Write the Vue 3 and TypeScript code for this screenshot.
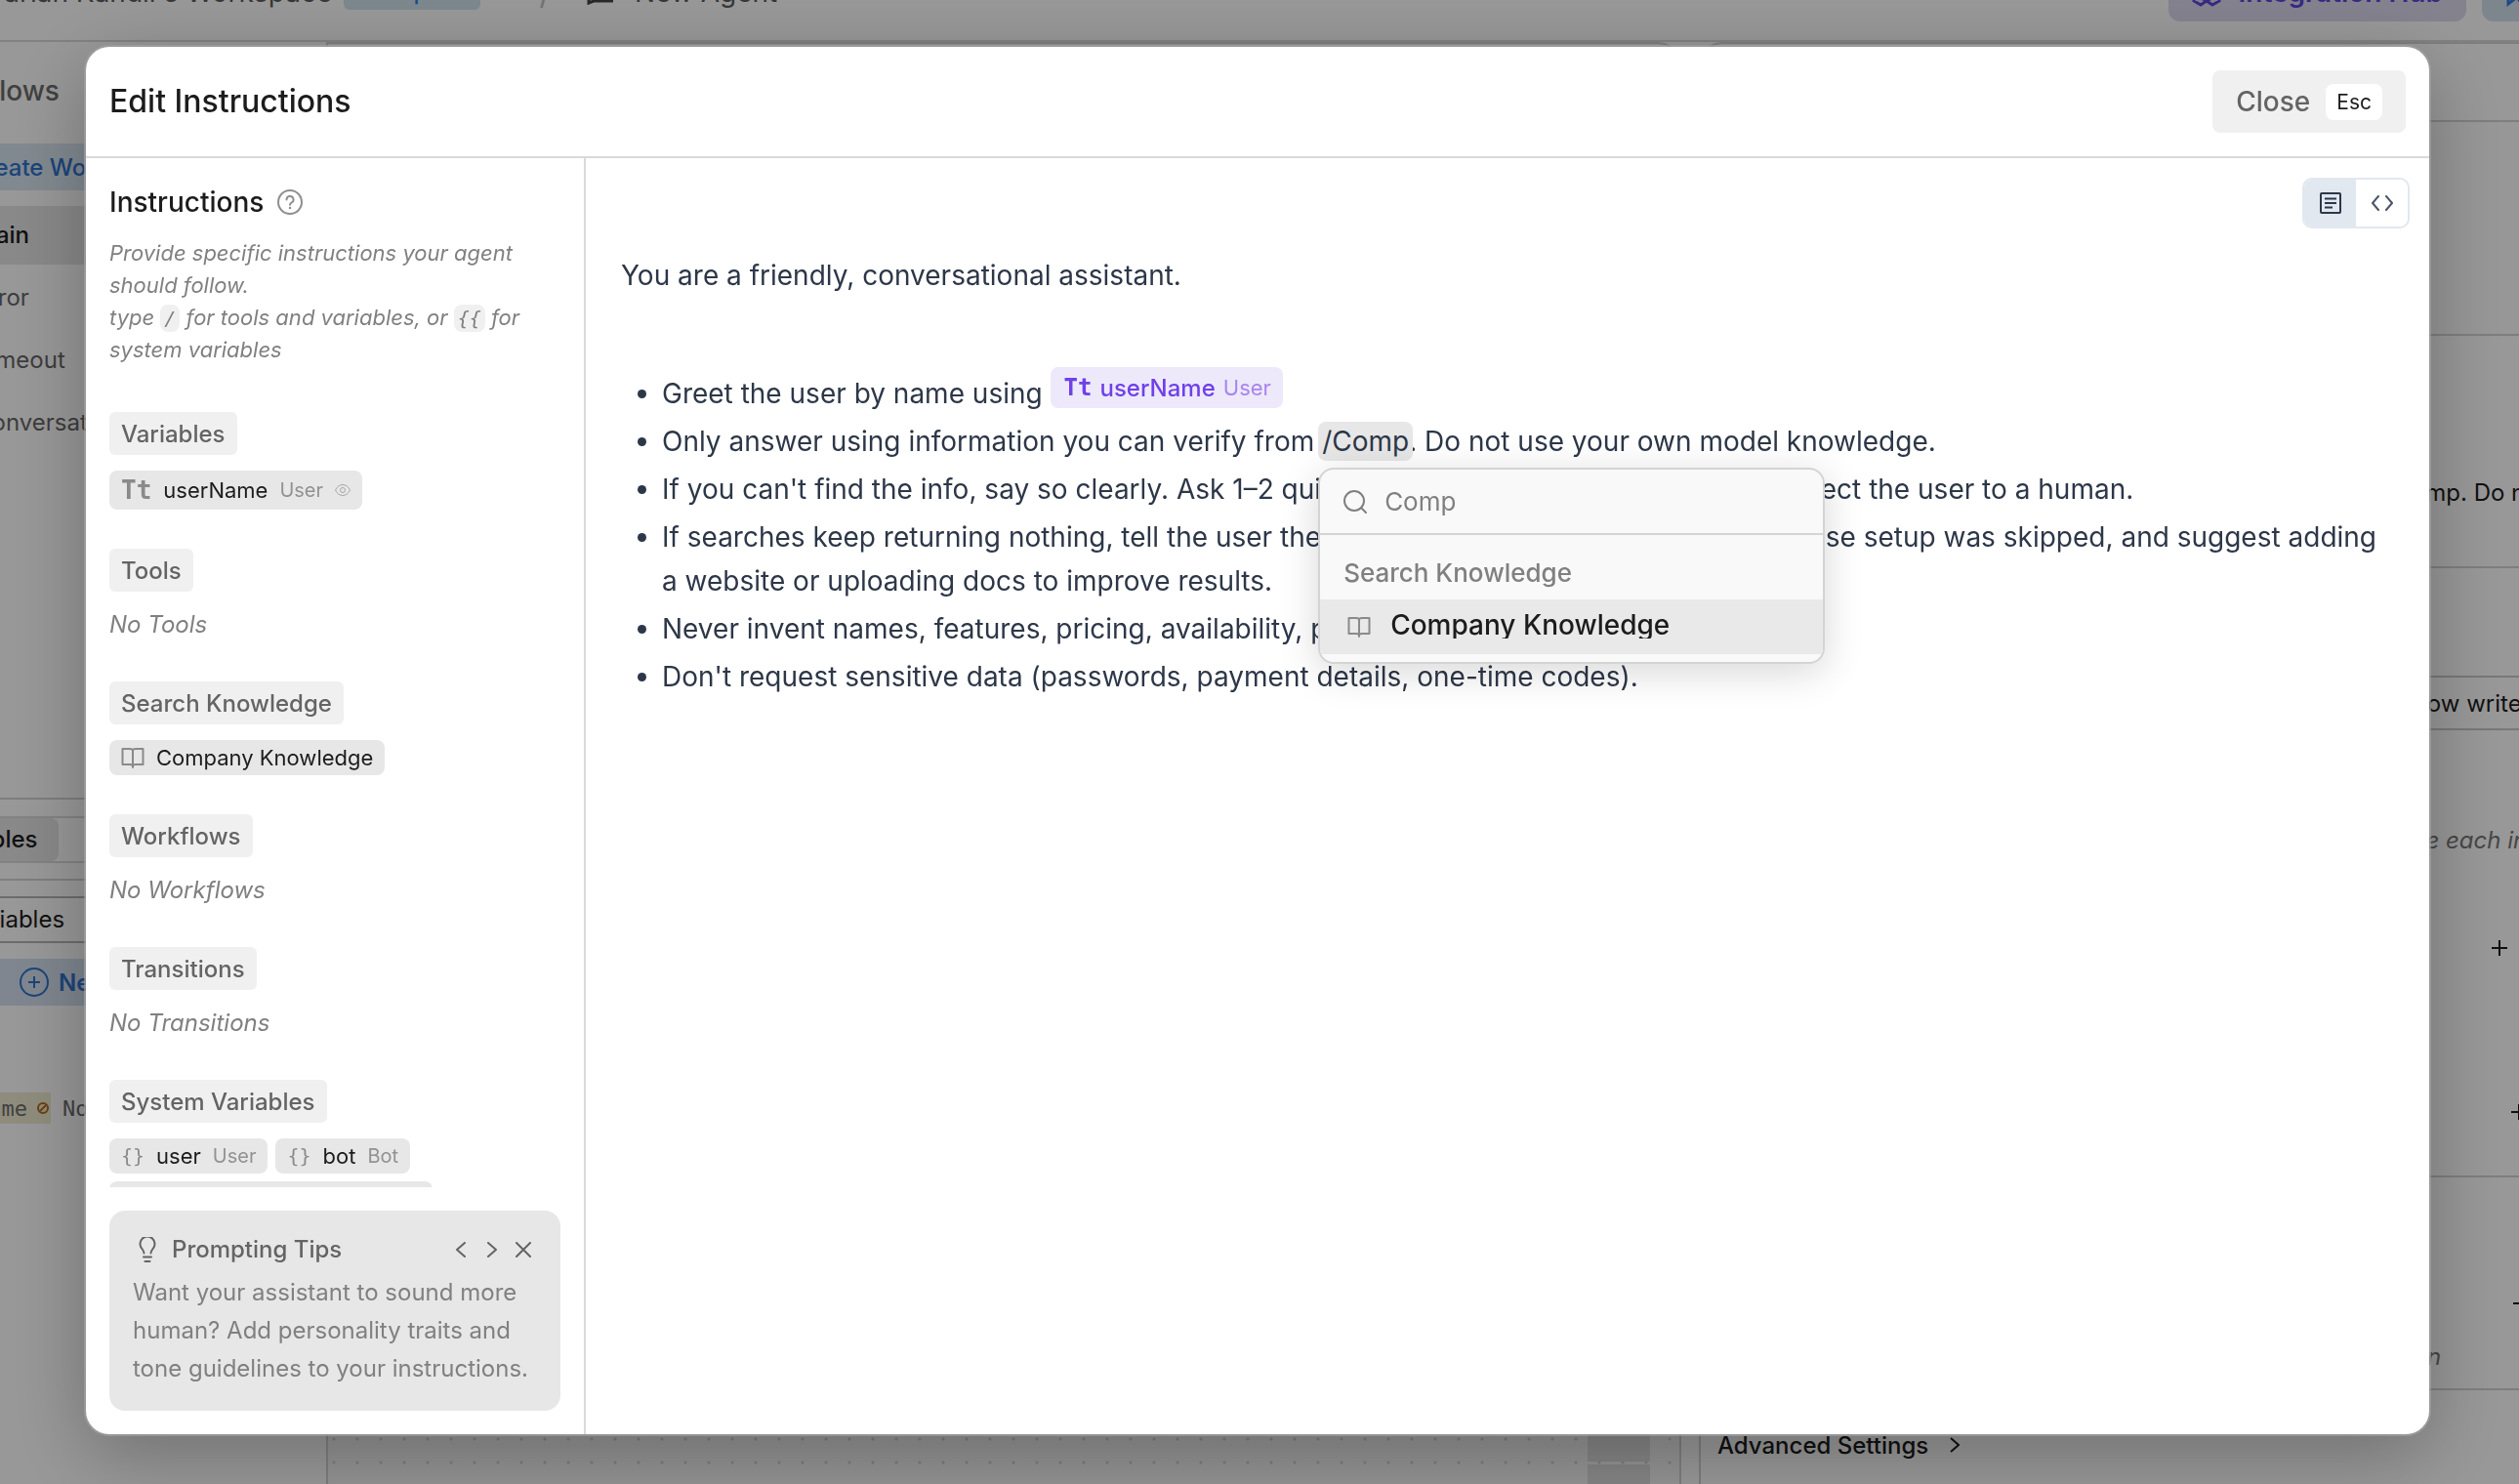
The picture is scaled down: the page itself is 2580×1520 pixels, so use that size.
<script setup lang="ts">
import { ref } from 'vue'

type ChipIcon = 'text' | 'book' | 'braces'
interface Chip { icon: ChipIcon; name: string; scope?: string; visible?: boolean }
interface Section { title: string; empty?: string; chips: Chip[] }

const sections: Section[] = [
  { title: 'Variables', chips: [{ icon: 'text', name: 'userName', scope: 'User', visible: true }] },
  { title: 'Tools', empty: 'No Tools', chips: [] },
  { title: 'Search Knowledge', chips: [{ icon: 'book', name: 'Company Knowledge' }] },
  { title: 'Workflows', empty: 'No Workflows', chips: [] },
  { title: 'Transitions', empty: 'No Transitions', chips: [] },
  {
    title: 'System Variables',
    chips: [
      { icon: 'braces', name: 'user', scope: 'User' },
      { icon: 'braces', name: 'bot', scope: 'Bot' },
      { icon: 'braces', name: 'conversation', scope: 'Conversation' },
    ],
  },
]

const workflows = ['Main', 'Error', 'Timeout', 'Conversation End']
const query = ref('Comp')
</script>

<template>
  <div class="screen">
    <div class="shell">
      <header class="topbar">
        <span class="crumb">Darian Kandil's Workspace</span>
        <span class="plan">Enterprise</span>
        <span class="slash">/</span>
        <svg class="chat" viewBox="0 0 28 28" fill="none" stroke="currentColor" stroke-width="3"><path d="M3 25V3h24v20H8z" /></svg>
        <span class="agent">New Agent</span>
        <span class="grow"></span>
        <button class="hub" type="button">
          <svg viewBox="0 0 30 30" fill="none" stroke="currentColor" stroke-width="3"><path d="M8 12l7-4 7 4v8l-7 4-7-4zM15 16v8M2 19l6-4 7 4v5l-6 4-7-4zM28 19l-6-4-7 4v5l6 4 7-4z" /></svg>
          Integration Hub
        </button>
        <button class="share" type="button" aria-label="Launch">
          <svg viewBox="0 0 30 30" fill="none" stroke="currentColor" stroke-width="3"><path d="M3 27V16L26 3 17 27l-5-7z" /></svg>
        </button>
      </header>

      <div class="columns">
        <nav class="flows">
          <h2 class="flows-title">Workflows</h2>
          <button class="create" type="button">Create Workflow</button>
          <ul class="flow-list">
            <li v-for="(flow, i) in workflows" :key="flow" :class="{ active: i === 0 }">{{ flow }}</li>
          </ul>
          <div class="tabs-wrap">
            <div class="tabs"><span class="tab on">Variables</span><span class="tab"></span></div>
          </div>
          <div class="filter">Search Variables</div>
          <button class="new-var" type="button">
            <svg viewBox="0 0 30 30" fill="none" stroke="currentColor" stroke-width="2"><circle cx="15" cy="15" r="14" /><path d="M15 9v12M9 15h12" /></svg>
            New Variable
          </button>
          <div class="var-row">
            <span class="var-tag">userName
              <svg viewBox="0 0 12 12" fill="none" stroke="currentColor" stroke-width="2"><circle cx="6" cy="6" r="5" /><path d="M3 9l6-6" /></svg>
            </span>
            <span>No value</span>
          </div>
        </nav>
        <main class="canvas"><div class="map"><i></i><i></i></div></main>
        <aside class="panel">
          <div class="p-head"></div>
          <div class="p-info"></div>
          <div class="p-text">from /Comp. Do not use</div>
          <div class="p-model"><span class="p-input">How writer</span></div>
          <div class="p-tools">
            <em>Configure each input</em>
            <svg class="plus first" viewBox="0 0 16 16" stroke="currentColor" stroke-width="2"><path d="M8 0v16M0 8h16" /></svg>
            <svg class="plus" viewBox="0 0 16 16" stroke="currentColor" stroke-width="2"><path d="M8 0v16M0 8h16" /></svg>
          </div>
          <div class="p-trans">
            <svg class="plus" viewBox="0 0 16 16" stroke="currentColor" stroke-width="2"><path d="M0 8h16" /></svg>
            <em>transition</em>
          </div>
          <div class="p-adv">Advanced Settings
            <svg viewBox="0 0 10 16" fill="none" stroke="currentColor" stroke-width="2"><path d="M1 1l8 7-8 7" /></svg>
          </div>
        </aside>
      </div>
    </div>

    <div class="overlay">
      <section class="modal" role="dialog" aria-labelledby="modal-title">
        <header class="modal-head">
          <h1 id="modal-title">Edit Instructions</h1>
          <button class="close" type="button">Close <kbd>Esc</kbd></button>
        </header>
        <div class="modal-body">
          <aside class="side">
            <div class="side-scroll">
              <h2 class="side-title">
                Instructions
                <svg class="help" viewBox="0 0 26 26" fill="none" stroke="currentColor" stroke-width="2" stroke-linecap="round"><circle cx="13" cy="13" r="12" /><path d="M9.500 10.500a3.500 3.500 0 1 1 5 3.200c-1 .5-1.500 1-1.500 2" /><path d="M13 18.900v.1" stroke-width="2.500" /></svg>
              </h2>
              <p class="hint">Provide specific instructions your agent should follow.<br />type <code>/</code> for tools and variables, or <code>{{ '\u007b\u007b' }}</code> for system variables</p>

              <div v-for="s in sections" :key="s.title" class="group">
                <h3>{{ s.title }}</h3>
                <p v-if="s.empty" class="empty">{{ s.empty }}</p>
                <div v-else class="chips">
                  <span v-for="c in s.chips" :key="c.name" class="chip" :class="{ tall: c.icon === 'text' }">
                    <b v-if="c.icon === 'text'" class="tt">Tt</b>
                    <svg v-else-if="c.icon === 'book'" class="book" viewBox="0 0 24 24" fill="none" stroke="currentColor" stroke-width="2" stroke-linejoin="round" stroke-linecap="round"><path d="M12 5v17M12 5c0-1.500-1-2-3-2H1.500v16H9c2 0 3 .5 3 2 0-1.500 1-2 3-2h7.500V3H15c-2 0-3 .5-3 2z" /></svg>
                    <span v-else class="braces">{}</span>
                    <span class="name">{{ c.name }}</span>
                    <span v-if="c.scope" class="scope">{{ c.scope }}</span>
                    <svg v-if="c.visible" class="eye" viewBox="0 0 16 12" fill="none" stroke="currentColor" stroke-width="1"><path d="M.5 6C2 2.500 5 .5 8 .5S14 2.500 15.500 6C14 9.500 11 11.500 8 11.500S2 9.500 .5 6z" /><ellipse cx="8" cy="6" rx="2.500" ry="2.500" /></svg>
                  </span>
                </div>
              </div>
            </div>

            <div class="tips">
              <div class="tips-head">
                <svg class="bulb" viewBox="0 0 18 26" fill="none" stroke="currentColor" stroke-width="2" stroke-linecap="round"><path d="M5.500 16.500c0-2-1-3-2.500-5a7.500 7.500 0 1 1 12 0c-1.500 2-2.500 3-2.500 5M5 20.500h8M6.500 25h5" /></svg>
                <h3>Prompting Tips</h3>
                <button type="button" aria-label="Previous tip"><svg viewBox="0 0 16 16" fill="none" stroke="currentColor" stroke-width="2" stroke-linecap="round" stroke-linejoin="round"><path d="M12 1L4 8l8 7" /></svg></button>
                <button type="button" aria-label="Next tip"><svg viewBox="0 0 16 16" fill="none" stroke="currentColor" stroke-width="2" stroke-linecap="round" stroke-linejoin="round"><path d="M4 1l8 7-8 7" /></svg></button>
                <button type="button" aria-label="Dismiss"><svg viewBox="0 0 16 16" fill="none" stroke="currentColor" stroke-width="2" stroke-linecap="round"><path d="M1 1l14 14M15 1L1 15" /></svg></button>
              </div>
              <p>Want your assistant to sound more human? Add personality traits and tone guidelines to your instructions.</p>
            </div>
          </aside>

          <div class="editor">
            <div class="toggle">
              <button class="on" type="button" aria-label="Rich text"><svg viewBox="0 0 22 22" fill="none" stroke="currentColor" stroke-width="2"><rect x="1" y="1" width="20" height="20" rx="1" /><path d="M5 6.500h12M5 11h12M5 15.500h8" /></svg></button>
              <button type="button" aria-label="Source"><svg viewBox="0 0 22 22" fill="none" stroke="currentColor" stroke-width="2" stroke-linecap="round" stroke-linejoin="round"><path d="M7 4L1 11l6 7M15 4l6 7-6 7" /></svg></button>
            </div>
            <div class="doc">
              <p>You are a friendly, conversational assistant.</p>
              <ul>
                <li>Greet the user by name using <span class="mention"><b class="tt">Tt</b><b>userName</b><span>User</span></span></li>
                <li>Only answer using information you can verify from <span class="slash-wrap"><mark>/Comp</mark><span class="menu">
                  <label class="search">
                    <svg viewBox="0 0 24 24" fill="none" stroke="currentColor" stroke-width="2" stroke-linecap="round"><circle cx="11" cy="11" r="10" /><path d="M18 18l5 5" /></svg>
                    <input v-model="query" type="text" aria-label="Search" />
                  </label>
                  <span class="menu-title">Search Knowledge</span>
                  <button class="option" type="button">
                    <svg class="book" viewBox="0 0 24 24" fill="none" stroke="currentColor" stroke-width="2" stroke-linejoin="round" stroke-linecap="round"><path d="M12 5v17M12 5c0-1.500-1-2-3-2H1.500v16H9c2 0 3 .5 3 2 0-1.500 1-2 3-2h7.500V3H15c-2 0-3 .5-3 2z" /></svg>
                    <span>Company Knowledge</span>
                  </button>
                </span></span>. Do not use your own model knowledge.</li>
                <li>If you can't find the info, say so clearly. Ask 1–2 quick clarifying questions or offer to connect the user to a human.</li>
                <li>If searches keep returning nothing, tell the user the library may be empty or knowledge base setup was skipped, and suggest adding a website or uploading docs to improve results.</li>
                <li>Never invent names, features, pricing, availability, policies, or results.</li>
                <li>Don't request sensitive data (passwords, payment details, one-time codes).</li>
              </ul>
            </div>
          </div>
        </div>
      </section>
    </div>
  </div>
</template>

<style>
body { margin: 0; }
</style>

<style scoped>
* { box-sizing: border-box; }
h1, h2, h3, p, ul { margin: 0; }
button { border: 0; padding: 0; font: inherit; color: inherit; background: none; }
svg { flex: none; display: block; }
.screen { height: 100vh; overflow: hidden; background: #fefefe; font-family: Inter, "Open Sans", sans-serif; font-size: 24px; color: #1c1c1c; }

/* Application behind the dialog */
.shell { display: flex; flex-direction: column; height: calc(100vh + 57px); margin: -57px -80px 0 -100px; }
.topbar { flex: none; display: flex; align-items: center; height: 100px; padding-left: 84px; border-bottom: 2px solid #d9d9d9; font-size: 28px; color: #5c5c5c; }
.plan { margin-left: 12px; padding: 0 16px; height: 36px; line-height: 36px; border-radius: 6px; background: #d0e2ec; color: #2f7de0; font-size: 22px; font-weight: 500; }
.slash { margin: 0 36px 0 60px; font-size: 32px; color: #c0c0c0; }
.chat { width: 28px; height: 28px; margin-right: 22px; color: #444; }
.grow { flex: 1; }
.hub, .share { display: flex; align-items: center; gap: 18px; height: 60px; padding: 0 24px; border-radius: 12px; font-weight: 600; background: #dcd9ec; color: #5a46d8; }
.share { width: 118px; margin-left: 16px; background: #d3dfec; color: #2f7de0; }
.hub svg, .share svg { width: 30px; }
.columns { flex: 1; min-height: 0; display: flex; gap: 18px; }
.flows { width: 436px; margin-right: -18px; border-right: 2px solid #d2d2d2; }
.flows-title { padding: 32px 18px 36px; font-size: 28px; line-height: 36px; font-weight: 500; color: #6c6c6c; }
.create { display: block; width: 400px; height: 48px; padding-left: 68px; background: #d8e5f0; color: #2f72cc; text-align: left; font-weight: 500; }
.flow-list { padding: 16px 0 0; list-style: none; height: 624px; color: #666; border-bottom: 2px solid #d2d2d2; }
.flow-list li { height: 60px; margin-bottom: 4px; padding-left: 74px; line-height: 60px; }
.flow-list .active { background: #e4e4e4; color: #1c1c1c; font-weight: 500; }
.tabs-wrap { padding: 17px 0 16px; border-bottom: 2px solid #d2d2d2; }
.tabs { display: flex; height: 48px; border: 2px solid #dadada; line-height: 44px; }
.tab { flex: 1; padding-left: 30px; }
.tab.on { flex: none; width: 158px; border-radius: 0 8px 8px 0; background: #e4e4e4; font-weight: 500; }
.filter { height: 48px; margin-top: 16px; line-height: 44px; border: 2px solid #b4b4b4; text-indent: -27px; }
.new-var { display: flex; align-items: center; gap: 10px; width: 100%; height: 48px; margin: 16px 0 89px; padding-left: 120px; background: #d5e0ee; color: #2f72cc; font-weight: 600; }
.new-var svg { width: 30px; }
.var-row { display: flex; align-items: center; gap: 12px; height: 32px; font: 22px "DejaVu Sans Mono", monospace; color: #6a6a6a; }
.var-tag { display: flex; align-items: center; justify-content: flex-end; gap: 10px; width: 152px; height: 32px; padding-right: 2px; background: #eeead0; }
.var-tag svg { width: 12px; color: #b36b1e; }
.canvas { flex: 1; min-width: 0; display: flex; align-items: flex-end; justify-content: flex-end; padding-right: 30px; border: 2px solid #d2d2d2; border-left: 0; border-bottom: 0; border-radius: 0 24px 0 0; background: radial-gradient(circle, #d0d0d0 1px, #f6f6f6 2px) 18px 1px / 24px 24px; }
.map { display: flex; flex-direction: column; gap: 3px; width: 64px; }
.map i { height: 60px; background: #dedede; }
.map i + i { height: 20px; }
.panel { width: 920px; border-left: 2px solid #d2d2d2; border-top: 2px solid #d2d2d2; border-radius: 24px 0 0 0; text-align: left; }
.panel > div { border-bottom: 2px solid #d2d2d2; overflow: hidden; }
.p-head { height: 80px; }
.p-info { height: 219px; background: #fcfcfc; }
.p-text { height: 238px; padding: 144px 0 0 642px; line-height: 34px; white-space: nowrap; }
.p-tools em, .p-trans em { color: #777; }
.panel > .p-model { height: 112px; padding-top: 110px; border-bottom-color: #c8c8c8; overflow: visible; }
.p-input { display: block; height: 56px; padding-left: 726px; line-height: 58px; border-bottom: 2px solid #c8c8c8; }
.p-tools { height: 512px; padding: 152px 0 0 644px; }
.plus { width: 16px; height: 16px; margin: 152px 0 0 186px; }
.plus.first { margin: 88px 0 0 166px; }
.p-trans { height: 218px; padding: 0 0 0 652px; }
.p-trans .plus { margin: 121px 0 32px 180px; }
.panel > .p-adv { display: flex; align-items: center; gap: 22px; height: 112px; padding-left: 17px; font-weight: 500; border: 0; }
.p-adv svg { width: 10px; }

/* Dialog */
.overlay { position: fixed; inset: 0; display: flex; padding: 48px 92px 51px 88px; background: rgba(0, 0, 0, 0.4); }
.modal { flex: 1; min-width: 0; display: flex; flex-direction: column; border-radius: 24px; background: #fff; box-shadow: 0 0 0 2px rgba(160, 160, 160, 0.7), 0 20px 80px rgba(0, 0, 0, 0.28); overflow: hidden; }
.modal-head { flex: none; display: flex; align-items: center; justify-content: space-between; height: 114px; padding: 0 24px; border-bottom: 2px solid #d9d9d9; }
.modal-head h1 { font-size: 32px; line-height: 40px; font-weight: 500; color: #1c1c1c; }
.close { display: flex; align-items: center; gap: 16px; height: 64px; padding: 0 24px; border-radius: 8px; background: #f0f0f0; color: #646464; font-size: 28px; font-weight: 500; }
kbd { height: 37px; padding: 0 11px; border-radius: 8px; background: #fff; color: #1c1c1c; font: 400 21px/37px Inter, sans-serif; }
.modal-body { flex: 1; min-height: 0; display: flex; }
.side { flex: none; display: flex; flex-direction: column; gap: 24px; width: 512px; padding: 24px; border-right: 2px solid #d9d9d9; }
.side-scroll { flex: 1; min-height: 0; overflow: hidden; }
.side-title { display: flex; align-items: center; gap: 14px; font-size: 28px; line-height: 42px; font-weight: 500; }
.help { width: 26px; color: #8f8f8f; }
.hint { margin: 15px 0 47px; font-size: 22px; line-height: 33px; font-style: italic; color: #808080; }
code { padding: 2px 4px; border-radius: 8px; background: #f0f0f0; font: italic 20px "DejaVu Sans Mono", monospace; }
.group { margin-bottom: 40px; }
.group h3 { width: fit-content; height: 44px; margin-bottom: 16px; padding: 0 12px; border-radius: 6px; background: #f0f0f0; color: #646464; font-size: 24px; line-height: 45px; font-weight: 500; }
.empty { font-size: 24px; line-height: 36px; font-style: italic; color: #808080; }
.chips { display: flex; flex-wrap: wrap; gap: 8px; }
.chip { display: flex; align-items: center; gap: 12px; height: 36px; padding: 0 12px; border-radius: 8px; background: #e7e7e7; font-size: 22px; white-space: nowrap; }
.chip.tall { height: 40px; }
.name { font-weight: 400; color: #1c1c1c; }
.scope { font-size: 20px; color: #929292; }
.tt { font: 700 26px "DejaVu Sans Mono", monospace; color: #8a8a8a; }
.book { width: 24px; height: 24px; color: #8a8a8a; }
.braces { font: 20px "DejaVu Sans Mono", monospace; color: #8a8a8a; }
.eye { width: 16px; color: #a8a8a8; }
.tips { flex: none; padding: 24px; border-radius: 16px; background: #e7e7e7; color: #808080; line-height: 39px; }
.tips-head { display: flex; align-items: center; gap: 16px; height: 32px; margin-bottom: 8px; padding: 0 6px; color: #646464; }
.tips-head h3 { flex: 1; font-size: 24px; line-height: 32px; font-weight: 500; }
.bulb { width: 18px; }
.tips-head button svg { width: 16px; }
.editor { flex: 1; min-width: 0; padding: 20px; color: #2d3748; }
.toggle { display: flex; width: 110px; height: 52px; margin-left: auto; border: 2px solid #e2e8f0; border-radius: 10px; overflow: hidden; color: #4a5568; }
.toggle button { flex: 1; display: flex; align-items: center; justify-content: center; }
.toggle .on { background: #e2e8f0; color: #2d3748; }
.toggle svg { width: 22px; }
.doc { padding: 26px 16px; font-size: 28px; line-height: 45px; }
.doc ul { margin-top: 71px; padding-left: 42px; display: flex; flex-direction: column; gap: 4px; }
.mention { display: inline-flex; align-items: center; gap: 8px; height: 42px; margin-bottom: 2px; padding: 0 12px 0 14px; border-radius: 8px; background: #ede9fb; color: #7040e8; font-size: 24px; vertical-align: text-bottom; }
.mention b { font-weight: 500; }
.mention .tt { color: #7040e8; font-size: 24px; font-weight: 700; }
.mention span { color: #a985ee; font-size: 22px; }
mark { margin: 0 -4px; padding: 3px 4px; border-radius: 8px; background: #e7e7e7; color: inherit; }
.slash-wrap { position: relative; }
.menu { position: absolute; top: 44px; left: -4px; z-index: 1; display: flex; flex-direction: column; width: 519px; padding-bottom: 8px; border: 2px solid #d4d4d4; border-radius: 16px; background: #f9f9f9; box-shadow: 0 8px 40px rgba(0, 0, 0, 0.16); overflow: hidden; font-size: 26px; color: #808080; }
.search { display: flex; align-items: center; gap: 18px; height: 67px; padding: 0 24px; border-bottom: 2px solid #d4d4d4; }
.search svg { width: 24px; }
.search input { flex: 1; min-width: 0; padding: 0; border: 0; outline: 0; background: none; font: inherit; color: #808080; }
.menu-title { height: 66px; padding: 20px 24px 0; line-height: 38px; font-weight: 500; }
.option { display: flex; align-items: center; gap: 20px; height: 56px; padding: 0 28px; background: #e9e9e9; text-align: left; font-size: 28px; font-weight: 500; color: #1c1c1c; }
.option span { height: 28px; margin-bottom: 4px; line-height: 28px; overflow: hidden; }
</style>
